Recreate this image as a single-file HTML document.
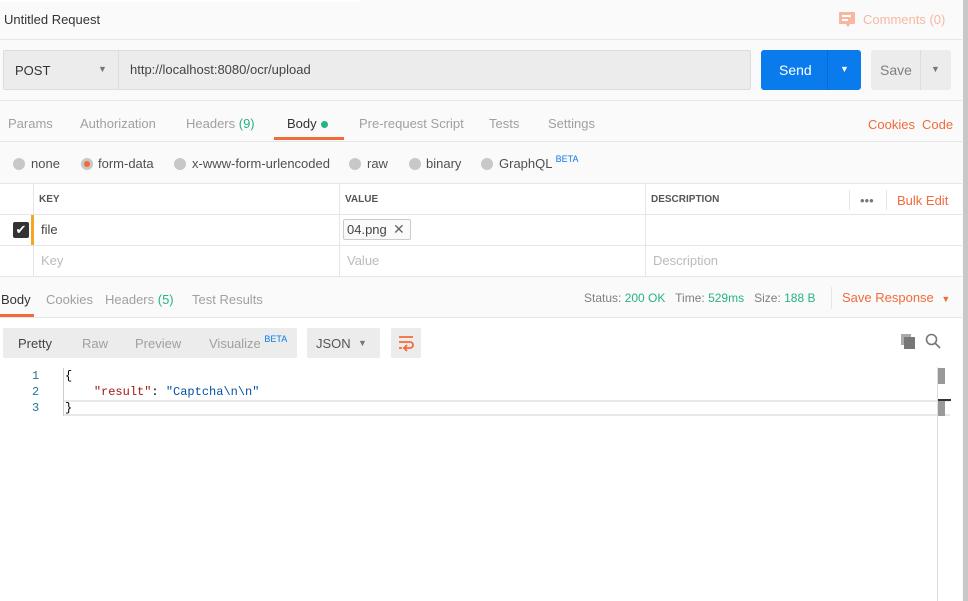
<!DOCTYPE html>
<html><head><meta charset="utf-8"><style>
*{box-sizing:border-box;margin:0;padding:0}
body{width:968px;height:601px;overflow:hidden;background:#fafafa;font-family:"Liberation Sans",sans-serif;font-size:13px;color:#505050;position:relative}
.a{position:absolute;white-space:nowrap}
.g{color:#26b47f}.o{color:#f26b3a}.l{color:#a0a0a0}
.rd{position:absolute;width:12px;height:12px;border-radius:50%;background:#c8c8c8}
.beta{font-size:9px;color:#097bed;position:relative;top:-6px}
</style></head><body>
<div class="a" style="left:0;top:0;width:360px;height:2px;background:#fff"></div>
<div class="a" style="left:963px;top:0;width:5px;height:601px;background:#c8c8c8"></div>
<div class="a" style="left:4px;top:12px;font-size:13px;color:#333">Untitled Request</div>
<div class="a" style="left:839px;top:12px;width:16px;height:12px;background:#f6b8a0;border-radius:1px"></div>
<div class="a" style="left:845px;top:23px;width:0;height:0;border-left:3px solid transparent;border-right:3px solid transparent;border-top:4px solid #f6b8a0"></div>
<div class="a" style="left:842px;top:15px;width:9px;height:2px;background:#fff"></div>
<div class="a" style="left:842px;top:19px;width:6px;height:2px;background:#fff"></div>
<div class="a" style="left:863px;top:12px;color:#f6b8a0">Comments (0)</div>
<div class="a" style="left:0;top:39px;width:962px;height:1px;background:#e6e6e6"></div>
<div class="a" style="left:3px;top:50px;width:748px;height:40px;background:#ececec;border:1px solid #ddd;border-radius:2px"></div>
<div class="a" style="left:118px;top:51px;width:1px;height:38px;background:#ddd"></div>
<div class="a" style="left:15px;top:63px;font-size:13px;color:#333">POST</div>
<div class="a" style="left:98px;top:64px;font-size:9px;color:#777">▼</div>
<div class="a" style="left:130px;top:62px;color:#444">http://localhost:8080/ocr/upload</div>
<div class="a" style="left:761px;top:50px;width:100px;height:40px;background:#097bed;border-radius:3px"></div>
<div class="a" style="left:827px;top:50px;width:1px;height:40px;background:#0a6ad0"></div>
<div class="a" style="left:779px;top:62px;font-size:14px;color:#fff">Send</div>
<div class="a" style="left:840px;top:64px;font-size:9px;color:#fff">▼</div>
<div class="a" style="left:871px;top:50px;width:80px;height:40px;background:#ececec;border-radius:3px"></div>
<div class="a" style="left:920px;top:50px;width:1px;height:40px;background:#ddd"></div>
<div class="a" style="left:880px;top:62px;font-size:14px;color:#808080">Save</div>
<div class="a" style="left:931px;top:64px;font-size:9px;color:#777">▼</div>
<div class="a" style="left:0;top:100px;width:962px;height:1px;background:#e6e6e6"></div>
<div class="a l" style="left:8px;top:116px">Params</div>
<div class="a l" style="left:80px;top:116px">Authorization</div>
<div class="a l" style="left:186px;top:116px">Headers <span class="g">(9)</span></div>
<div class="a" style="left:287px;top:116px;color:#333">Body</div>
<div class="a" style="left:321px;top:121px;width:7px;height:7px;border-radius:50%;background:#26b47f"></div>
<div class="a" style="left:274px;top:137px;width:70px;height:3px;background:#f26b3a"></div>
<div class="a l" style="left:359px;top:116px">Pre-request Script</div>
<div class="a l" style="left:489px;top:116px">Tests</div>
<div class="a l" style="left:548px;top:116px">Settings</div>
<div class="a o" style="left:868px;top:117px">Cookies</div>
<div class="a o" style="left:922px;top:117px">Code</div>
<div class="a" style="left:0;top:141px;width:962px;height:1px;background:#e6e6e6"></div>
<div class="rd" style="left:13px;top:158px"></div><div class="a" style="left:31px;top:156px">none</div>
<div class="rd" style="left:81px;top:158px"><div style="margin:3px;width:6px;height:6px;border-radius:50%;background:#f26b3a"></div></div><div class="a" style="left:98px;top:156px">form-data</div>
<div class="rd" style="left:174px;top:158px"></div><div class="a" style="left:192px;top:156px">x-www-form-urlencoded</div>
<div class="rd" style="left:349px;top:158px"></div><div class="a" style="left:367px;top:156px">raw</div>
<div class="rd" style="left:409px;top:158px"></div><div class="a" style="left:426px;top:156px">binary</div>
<div class="rd" style="left:481px;top:158px"></div><div class="a" style="left:499px;top:156px">GraphQL <span class="beta">BETA</span></div>
<div class="a" style="left:0;top:183px;width:962px;height:94px;background:#fff;border-top:1px solid #e6e6e6;border-bottom:1px solid #e6e6e6"></div>
<div class="a" style="left:0;top:214px;width:962px;height:1px;background:#e6e6e6"></div>
<div class="a" style="left:0;top:245px;width:962px;height:1px;background:#e6e6e6"></div>
<div class="a" style="left:33px;top:184px;width:1px;height:92px;background:#e6e6e6"></div>
<div class="a" style="left:339px;top:184px;width:1px;height:92px;background:#e6e6e6"></div>
<div class="a" style="left:645px;top:184px;width:1px;height:92px;background:#e6e6e6"></div>
<div class="a" style="left:849px;top:190px;width:1px;height:20px;background:#e6e6e6"></div>
<div class="a" style="left:886px;top:190px;width:1px;height:20px;background:#e6e6e6"></div>
<div class="a" style="left:39px;top:194px;font-size:10px;font-weight:bold;color:#555">KEY</div>
<div class="a" style="left:345px;top:194px;font-size:10px;font-weight:bold;color:#555">VALUE</div>
<div class="a" style="left:651px;top:194px;font-size:10px;font-weight:bold;color:#555">DESCRIPTION</div>
<div class="a" style="left:860px;top:193px;color:#777;font-size:13px;letter-spacing:0px">•••</div>
<div class="a o" style="left:897px;top:193px">Bulk Edit</div>
<div class="a" style="left:13px;top:222px;width:16px;height:16px;background:#333;border-radius:2px;color:#fff;font-size:13px;line-height:16px;text-align:center">✔</div>
<div class="a" style="left:31px;top:215px;width:3px;height:30px;background:#f6a623"></div>
<div class="a" style="left:41px;top:222px;color:#444">file</div>
<div class="a" style="left:343px;top:219px;width:68px;height:21px;border:1px solid #ccc;border-radius:2px;background:#fafafa"></div>
<div class="a" style="left:347px;top:222px;color:#444">04.png</div>
<div class="a" style="left:393px;top:221px;color:#666;font-size:14px">✕</div>
<div class="a" style="left:41px;top:253px;color:#bbb">Key</div>
<div class="a" style="left:347px;top:253px;color:#bbb">Value</div>
<div class="a" style="left:653px;top:253px;color:#bbb">Description</div>
<div class="a" style="left:1px;top:292px;color:#333">Body</div>
<div class="a" style="left:0;top:314px;width:34px;height:3px;background:#f26b3a"></div>
<div class="a l" style="left:46px;top:292px">Cookies</div>
<div class="a l" style="left:105px;top:292px">Headers <span class="g">(5)</span></div>
<div class="a l" style="left:192px;top:292px">Test Results</div>
<div class="a" style="left:584px;top:291px;font-size:12px;color:#808080">Status: <span class="g">200 OK</span> &nbsp; Time: <span class="g">529ms</span> &nbsp; Size: <span class="g">188 B</span></div>
<div class="a" style="left:831px;top:287px;width:1px;height:22px;background:#e6e6e6"></div>
<div class="a o" style="left:842px;top:290px">Save Response <span style="font-size:9px;margin-left:4px">▼</span></div>
<div class="a" style="left:0;top:317px;width:962px;height:284px;background:#fff;border-top:1px solid #e6e6e6"></div>
<div class="a" style="left:3px;top:328px;width:294px;height:30px;background:#ececec;border-radius:2px"></div>
<div class="a" style="left:18px;top:336px;color:#444">Pretty</div>
<div class="a l" style="left:82px;top:336px">Raw</div>
<div class="a l" style="left:135px;top:336px">Preview</div>
<div class="a l" style="left:209px;top:336px">Visualize <span class="beta">BETA</span></div>
<div class="a" style="left:307px;top:328px;width:73px;height:30px;background:#ececec;border-radius:2px"></div>
<div class="a" style="left:316px;top:336px;color:#555">JSON</div>
<div class="a" style="left:358px;top:338px;font-size:9px;color:#777">▼</div>
<div class="a" style="left:391px;top:328px;width:30px;height:30px;background:#ececec;border-radius:2px"></div>
<svg class="a" style="left:397px;top:334px" width="18" height="18" viewBox="0 0 18 18" fill="none" stroke="#f26b3a" stroke-width="1.8"><path d="M2 3h14M2 8h11a3 3 0 0 1 0 6H8M10 11l-3 3 3 3M2 14h3"/></svg>
<div class="a" style="left:901px;top:334px;width:10px;height:11px;background:#aaa"></div>
<div class="a" style="left:904px;top:337px;width:11px;height:12px;background:#777"></div>
<svg class="a" style="left:925px;top:333px" width="16" height="16" viewBox="0 0 16 16" fill="none" stroke="#777" stroke-width="1.6"><circle cx="6.5" cy="6.5" r="5"/><path d="M10 10l5 5"/></svg>
<div class="a" style="left:63px;top:400px;width:887px;height:16px;border-top:2px solid #e8e8e8;border-bottom:2px solid #e8e8e8;background:#fff"></div>
<div class="a" style="left:63px;top:368px;width:1px;height:48px;background:#ccc"></div>
<div class="a" style="left:937px;top:367px;width:1px;height:234px;background:#ddd"></div>
<div class="a" style="left:938px;top:368px;width:7px;height:16px;background:#999"></div>
<div class="a" style="left:938px;top:400px;width:7px;height:16px;background:#999"></div>
<div class="a" style="left:938px;top:399px;width:13px;height:2px;background:#333"></div>
<div class="a" style="font-family:'Liberation Mono',monospace;font-size:12px;line-height:16px;left:0;top:368px">
<div style="position:absolute;left:32px;color:#237893;text-align:right">1<br>2<br>3</div>
<div style="position:absolute;left:65px;color:#000">{<br>&nbsp;&nbsp;&nbsp;&nbsp;<span style="color:#a31515">"result"</span>: <span style="color:#0451a5">"Captcha\n\n"</span><br>}</div>
</div>
</body></html>
